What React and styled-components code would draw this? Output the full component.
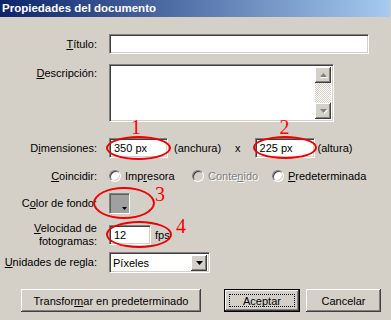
import React from "react";
import styled, { createGlobalStyle } from "styled-components";

const Global = createGlobalStyle`
  html, body { margin: 0; padding: 0; background: #d4d0c8; }
  body { font-family: "Liberation Sans", Arial, sans-serif; font-size: 11px; color: #000; }
  #root { width: 391px; height: 320px; overflow: hidden; }
`;

const Window = styled.div`
  width: 391px;
  height: 320px;
  background: #d4d0c8;
  display: flex;
  flex-direction: column;
`;

const TitleBar = styled.div`
  height: 17px;
  width: 390px;
  background: linear-gradient(to right, #0a246a, #a6caf0);
  display: flex;
  align-items: center;
  padding-left: 2px;
  box-sizing: border-box;
`;

const Title = styled.span`
  color: #fff;
  font-weight: bold;
  font-size: 11.5px;
  line-height: 17px;
  white-space: nowrap;
`;

const Form = styled.div`
  display: flex;
  flex-direction: column;
`;

const Row = styled.div`
  display: grid;
  grid-template-columns: 97px 1fr;
  column-gap: 12px;
  margin-top: ${(p) => p.$mt}px;
  height: ${(p) => p.$h}px;
  align-items: ${(p) => p.$align || "center"};
`;

const Label = styled.div`
  text-align: right;
  white-space: nowrap;
  line-height: 13px;
  padding-top: ${(p) => p.$pt || 0}px;
`;

const Content = styled.div`
  display: flex;
  align-items: center;
  height: 100%;
`;

const sunken = `
  box-sizing: border-box;
  border: 1px solid;
  border-color: #808080 #ffffff #ffffff #808080;
  box-shadow: inset 1px 1px #404040, inset -1px -1px #d4d0c8;
`;

const Field = styled.div`
  ${sunken}
  width: ${(p) => p.$w}px;
  height: 20px;
  background: #fff;
  padding: 0 4px;
  display: flex;
  align-items: center;
  white-space: nowrap;
`;

const TextArea = styled.div`
  ${sunken}
  width: 225px;
  height: 58px;
  background: #fff;
  display: flex;
  justify-content: flex-end;
  padding: 2px;
`;

const ScrollBar = styled.div`
  width: 16px;
  height: 100%;
  display: flex;
  flex-direction: column;
`;

const raised = `
  box-sizing: border-box;
  background: #d4d0c8;
  box-shadow: inset -1px -1px #404040, inset 1px 1px #ffffff, inset -2px -2px #808080, inset 2px 2px #d4d0c8;
`;

const ScrollButton = styled.div`
  ${raised}
  width: 16px;
  height: 16px;
  display: flex;
  align-items: center;
  justify-content: center;
  flex: none;
`;

const Track = styled.div`
  flex: 1;
  background-color: #d4d0c8;
  background-image: conic-gradient(#ffffff 25%, #d4d0c8 0 50%, #ffffff 0 75%, #d4d0c8 0);
  background-size: 2px 2px;
`;

const Text = styled.span`
  white-space: nowrap;
  margin-left: ${(p) => p.$ml || 0}px;
  color: ${(p) => (p.$disabled ? "#808080" : "#000")};
  text-shadow: ${(p) => (p.$disabled ? "1px 1px 0 #ffffff" : "none")};
`;

const Anchor = styled.span`
  position: relative;
  display: inline-flex;
  margin-left: ${(p) => p.$ml || 0}px;
`;

const Ring = styled.span`
  position: absolute;
  left: ${(p) => p.$l}px;
  top: ${(p) => p.$t}px;
  width: ${(p) => p.$w}px;
  height: ${(p) => p.$h}px;
  box-sizing: border-box;
  border: 2.8px solid #f00000;
  border-radius: 50%;
  pointer-events: none;
`;

const Mark = styled.span`
  position: absolute;
  left: ${(p) => p.$l}px;
  top: ${(p) => p.$t}px;
  font-family: "Liberation Serif", "Times New Roman", serif;
  font-size: 20px;
  line-height: 20px;
  color: #ff0000;
`;

const Options = styled.div`
  display: flex;
  align-items: center;
`;

const Option = styled.label`
  display: flex;
  align-items: center;
  width: ${(p) => (p.$w ? `${p.$w}px` : "auto")};
  gap: 4px;
`;

const Radio = styled.span`
  width: 12px;
  height: 12px;
  box-sizing: border-box;
  border-radius: 50%;
  border: 1px solid;
  border-color: #808080 #ffffff #ffffff #808080;
  box-shadow: inset 1px 1px #404040, inset -1px -1px #d4d0c8;
  background: ${(p) => (p.$disabled ? "#d4d0c8" : "#ffffff")};
  flex: none;
`;

const Swatch = styled.div`
  box-sizing: border-box;
  border: 1px solid;
  border-color: #808080 #ffffff #ffffff #808080;
  box-shadow: inset 1px 1px #606060;
  width: 21px;
  height: 21px;
  background: #a0a0a0;
  padding: 2px 2px 3px 2px;
  display: flex;
  align-items: flex-end;
  justify-content: flex-end;
`;

const Select = styled.div`
  ${sunken}
  width: 101px;
  height: 21px;
  background: #fff;
  display: flex;
  align-items: center;
  justify-content: space-between;
  padding: 2px 2px 2px 3px;
`;

const Footer = styled.div`
  display: flex;
  align-items: center;
  margin-top: 16px;
  padding: 0 10px 0 21px;
`;

const Button = styled.div`
  ${raised}
  height: 23px;
  width: ${(p) => p.$w}px;
  margin-left: ${(p) => (p.$auto ? "auto" : `${p.$ml || 0}px`)};
  display: flex;
  align-items: center;
  justify-content: center;
  white-space: nowrap;
  ${(p) =>
    p.$default &&
    `
    border: 1px solid #000;
    box-shadow: inset -1px -1px #404040, inset 1px 1px #ffffff, inset -2px -2px #808080;
  `}
`;

const Focus = styled.span`
  display: flex;
  align-items: center;
  justify-content: center;
  width: calc(100% - 8px);
  height: calc(100% - 8px);
  box-sizing: border-box;
  outline: 1px dotted #000;
  outline-offset: -1px;
`;

const ArrowDisabled = ({ up }) => (
  <svg width="7" height="5" viewBox="0 0 7 5" style={{ overflow: "visible" }}>
    {up ? (
      <>
        <polygon points="4,1 8,5 0,5" fill="#ffffff" />
        <polygon points="3.5,0 7,4 0,4" fill="#808080" />
      </>
    ) : (
      <>
        <polygon points="1,1 8,1 4.5,5" fill="#ffffff" />
        <polygon points="0,0 7,0 3.5,4" fill="#808080" />
      </>
    )}
  </svg>
);

const ArrowDown = () => (
  <svg width="7" height="4" viewBox="0 0 7 4">
    <polygon points="0,0 7,0 3.5,4" fill="#000" />
  </svg>
);

const SmallArrow = () => (
  <svg width="5" height="3" viewBox="0 0 5 3">
    <polygon points="0,0 5,0 2.5,3" fill="#000" />
  </svg>
);

export default function App() {
  return (
    <>
      <Global />
      <Window>
        <TitleBar>
          <Title>Propiedades del documento</Title>
        </TitleBar>
        <Form>
          <Row $mt={17} $h={20}>
            <Label>
              <u>T</u>ítulo:
            </Label>
            <Content>
              <Field $w={260} />
            </Content>
          </Row>

          <Row $mt={10} $h={58} $align="start">
            <Label $pt={3}>
              <u>D</u>escripción:
            </Label>
            <Content>
              <TextArea>
                <ScrollBar>
                  <ScrollButton>
                    <ArrowDisabled up />
                  </ScrollButton>
                  <Track />
                  <ScrollButton>
                    <ArrowDisabled />
                  </ScrollButton>
                </ScrollBar>
              </TextArea>
            </Content>
          </Row>

          <Row $mt={16} $h={20}>
            <Label>
              D<u>i</u>mensiones:
            </Label>
            <Content>
              <Anchor>
                <Field $w={59}>350 px</Field>
                <Ring $l={-3} $t={-2} $w={65} $h={24} />
                <Mark $l={22} $t={-21}>1</Mark>
              </Anchor>
              <Text $ml={6}>(anchura)</Text>
              <Text $ml={14}>x</Text>
              <Anchor $ml={14}>
                <Field $w={60}>225 px</Field>
                <Ring $l={-2} $t={-2} $w={64} $h={23} />
                <Mark $l={25} $t={-21}>2</Mark>
              </Anchor>
              <Text $ml={3}>(altura)</Text>
            </Content>
          </Row>

          <Row $mt={11} $h={14}>
            <Label>
              <u>C</u>oincidir:
            </Label>
            <Content>
              <Options>
                <Option $w={83}>
                  <Radio />
                  <Text>
                    Imp<u>r</u>esora
                  </Text>
                </Option>
                <Option $w={80}>
                  <Radio $disabled />
                  <Text $disabled>
                    Conte<u>n</u>ido
                  </Text>
                </Option>
                <Option>
                  <Radio />
                  <Text>
                    <u>P</u>redeterminada
                  </Text>
                </Option>
              </Options>
            </Content>
          </Row>

          <Row $mt={10} $h={21}>
            <Label>
              C<u>o</u>lor de fondo:
            </Label>
            <Content>
              <Anchor>
                <Swatch>
                  <SmallArrow />
                </Swatch>
                <Ring $l={-16} $t={-6} $w={62} $h={32} />
                <Mark $l={46} $t={-9}>3</Mark>
              </Anchor>
            </Content>
          </Row>

          <Row $mt={8} $h={26}>
            <Label>
              <u>V</u>elocidad de
              <br />
              fotogramas:
            </Label>
            <Content>
              <Anchor>
                <Field $w={42}>12</Field>
                <Ring $l={-3} $t={-4} $w={66} $h={27} />
                <Mark $l={67} $t={-9}>4</Mark>
              </Anchor>
              <Text $ml={4}>fps</Text>
            </Content>
          </Row>

          <Row $mt={4} $h={21}>
            <Label>
              <u>U</u>nidades de regla:
            </Label>
            <Content>
              <Select>
                <Text>Píxeles</Text>
                <ScrollButton>
                  <ArrowDown />
                </ScrollButton>
              </Select>
            </Content>
          </Row>
        </Form>

        <Footer>
          <Button $w={180}>
            Transfor<u>m</u>ar en predeterminado
          </Button>
          <Button $w={76} $auto $default>
            <Focus>Aceptar</Focus>
          </Button>
          <Button $w={75} $ml={6}>
            Cancelar
          </Button>
        </Footer>
      </Window>
    </>
  );
}
